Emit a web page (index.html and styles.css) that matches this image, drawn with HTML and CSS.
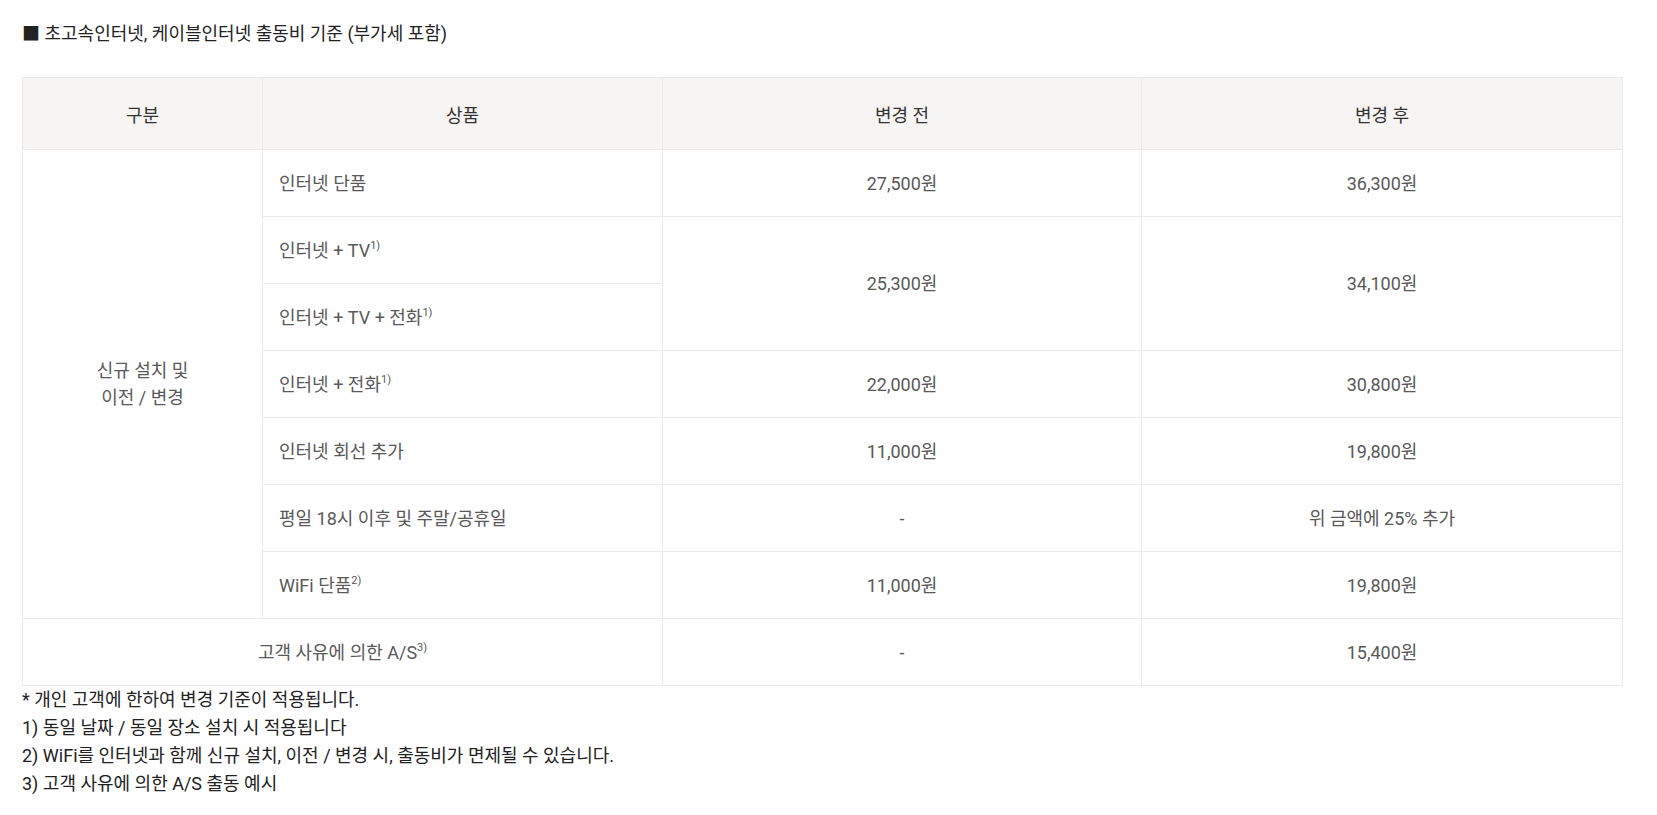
FILE: index.html
```html
<!DOCTYPE html>
<html lang="ko">
<head>
<meta charset="utf-8">
<title>출동비 기준</title>
<link rel="stylesheet" href="styles.css">
</head>
<body>
<div class="wrap">
  <h3 class="title">■ 초고속인터넷, 케이블인터넷 출동비 기준 (부가세 포함)</h3>
  <table class="fee">
    <colgroup>
      <col class="c1"><col class="c2"><col class="c3"><col class="c4">
    </colgroup>
    <thead>
      <tr><th>구분</th><th>상품</th><th>변경 전</th><th>변경 후</th></tr>
    </thead>
    <tbody>
      <tr>
        <td rowspan="7" class="center">신규 설치 및<br>이전 / 변경</td>
        <td class="prod">인터넷 단품</td>
        <td>27,500원</td>
        <td>36,300원</td>
      </tr>
      <tr>
        <td class="prod">인터넷 + TV<sup>1)</sup></td>
        <td rowspan="2">25,300원</td>
        <td rowspan="2">34,100원</td>
      </tr>
      <tr>
        <td class="prod">인터넷 + TV + 전화<sup>1)</sup></td>
      </tr>
      <tr>
        <td class="prod">인터넷 + 전화<sup>1)</sup></td>
        <td>22,000원</td>
        <td>30,800원</td>
      </tr>
      <tr>
        <td class="prod">인터넷 회선 추가</td>
        <td>11,000원</td>
        <td>19,800원</td>
      </tr>
      <tr>
        <td class="prod">평일 18시 이후 및 주말/공휴일</td>
        <td>-</td>
        <td>위 금액에 25% 추가</td>
      </tr>
      <tr>
        <td class="prod">WiFi 단품<sup>2)</sup></td>
        <td>11,000원</td>
        <td>19,800원</td>
      </tr>
      <tr>
        <td colspan="2">고객 사유에 의한 A/S<sup>3)</sup></td>
        <td>-</td>
        <td>15,400원</td>
      </tr>
    </tbody>
  </table>
  <ul class="notes">
    <li>* 개인 고객에 한하여 변경 기준이 적용됩니다.</li>
    <li>1) 동일 날짜 / 동일 장소 설치 시 적용됩니다</li>
    <li>2) WiFi를 인터넷과 함께 신규 설치, 이전 / 변경 시, 출동비가 면제될 수 있습니다.</li>
    <li>3) 고객 사유에 의한 A/S 출동 예시</li>
  </ul>
</div>
</body>
</html>
```
FILE: styles.css
```css
* { box-sizing: border-box; }
html, body { margin: 0; padding: 0; background: #fff; }
body {
  font-family: Roboto, "Noto Sans CJK KR", sans-serif;
  color: #595959;
  font-size: 18px;
}
.wrap {
  width: 1600px;
  margin-left: 22px;
  padding-top: 20px;
}
.title {
  margin: 0;
  font-size: 18px;
  font-weight: 400;
  line-height: 28px;
  color: #222;
}
.fee {
  margin-top: 29px;
  width: 1600px;
  border-collapse: collapse;
  table-layout: fixed;
  border: 1px solid #ebebeb;
}
.c1 { width: 240px; }
.c2 { width: 400px; }
.c3 { width: 479px; }
.c4 { width: 481px; }
.fee th {
  height: 72px;
  background: #f6f5f3;
  color: #333;
  font-weight: 400;
  font-size: 18px;
  border: 1px solid #ebebeb;
}
.fee td {
  height: 67px;
  border: 1px solid #ebebeb;
  text-align: center;
  vertical-align: middle;
  line-height: 27px;
  padding: 0 16px;
}
.fee td.prod { text-align: left; }
.fee sup {
  font-size: 11px;
  line-height: 0;
  vertical-align: 8px;
}
.notes {
  list-style: none;
  margin: 0;
  padding: 0;
  color: #222;
}
.notes li {
  line-height: 28px;
}
```
